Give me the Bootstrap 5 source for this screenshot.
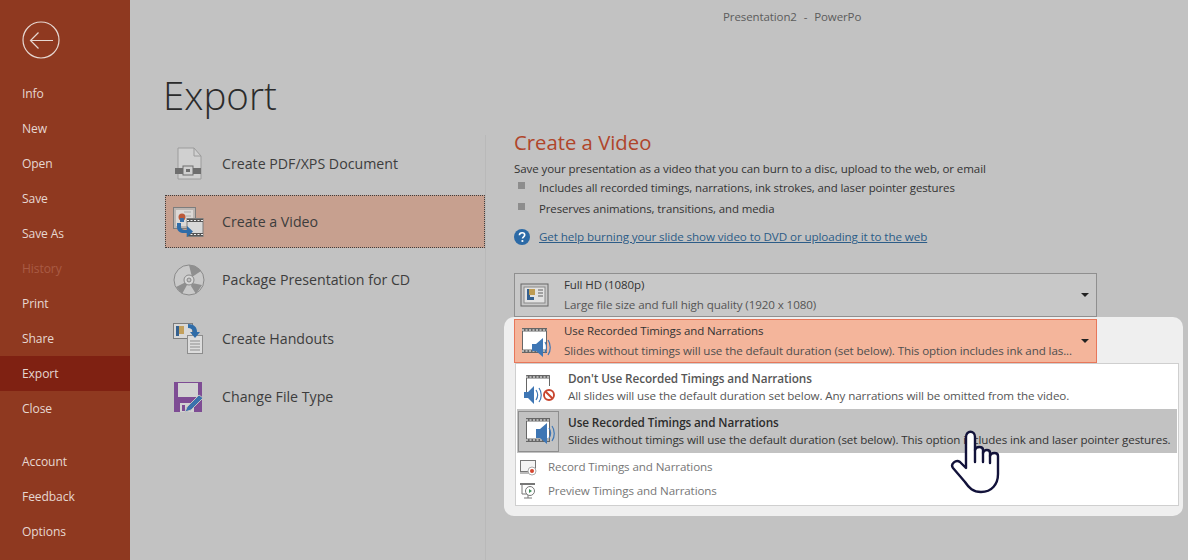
<!DOCTYPE html>
<html lang="en"><head><meta charset="utf-8"><title>Export</title>
<link href="https://cdn.jsdelivr.net/npm/bootstrap@5.3.0/dist/css/bootstrap.min.css" rel="stylesheet">
<style>
html,body{height:560px;overflow:hidden}
body{font-family:"Open Sans","Noto Sans",sans-serif;background:#c2c2c2;color:#333;font-size:12px;letter-spacing:-.1px}
.side{width:130px;height:560px;background:#8f3920;color:#e6d7d1;flex:none}
.backb{padding:21px 0 0 22px;height:76px}
.sitem{height:35px;padding-left:22px;line-height:36px;font-size:12.1px}
.sitem.on{background:#7f2112}
.sitem.off{color:#a95b44}
.sgap{height:18px}
.topt{height:33px;padding-left:593px;line-height:33px;font-size:11.5px;color:#5c5c5c;word-spacing:4px}
.ttl{font-size:38.5px;font-weight:300;color:#2b2b2b;margin:32px 0 0 33px;height:67px;line-height:60px;letter-spacing:0}
.leftc{width:320px;margin-left:35px;margin-top:5px;flex:none}
.lrow{height:53px;margin-bottom:5.3px;font-size:14.2px;color:#3d3d3d;letter-spacing:0;padding-left:7px;gap:17px;border:1px dotted transparent}
.lrow.on{background:#c7a08f;border-color:#3e3e3e}
.lrow svg{flex:none}
.rightc{padding-left:28px;border-left:1px solid #b9b9b9;height:425px;margin-top:3px}
.h2x{font-size:20.3px;color:#b0452a;font-weight:400;margin:-6px 0 0;height:30px;line-height:27px;letter-spacing:0}
.sub{margin:0;padding-top:2px;line-height:16px;font-size:11.55px;color:#333}
.bul{height:21px;font-size:11.45px;gap:14px;padding-left:4px;color:#333}
.bul i{width:7px;height:7px;background:#8d8d8d;display:block;margin-top:-4px}
.hlp{gap:9px;margin-top:8px;height:20px}
.hlp a{color:#2c5c87;font-size:11.65px}
.dd{width:583px;height:44px;border:1px solid #8f8f8f;background:#c8c8c8;padding:0 0 0 5px;gap:14px;position:relative;margin-top:26px}
.dd svg{flex:none}
.dt{font-size:11.5px;color:#333;line-height:20px;white-space:nowrap}
.dt span{display:block;color:#555;font-size:11.6px}
.caret{position:absolute;right:7px;top:19px;width:0;height:0;border:4px solid transparent;border-top:4px solid #222;border-bottom:0}
.hilite{width:679px;height:199px;background:#efefef;border-radius:10px;margin-left:-10px;padding:2px 0 0 10px}
.dd.sel{margin:0;background:#f4b59b;border-color:#e8775a;gap:12px}
.dd.sel span{color:#4f4f4f}
.menux{width:664px;height:143px;margin-left:1px;background:#fff;border:1px solid #cfcfcf;padding:1px}
.mrow{height:44px;gap:11px;padding-left:6px;line-height:17px;font-size:11.63px;color:#555;white-space:nowrap}
.mrow b{display:block;font-weight:600;color:#555;font-size:11.75px}
.mrow svg{flex:none}
.mrow.act{background:#c2c2c2;color:#333;padding-left:1px;gap:9px;font-size:11.58px}
.mrow.act b{color:#2c2c2c}
.ibox{width:41px;height:41px;border:1px solid #8e8e8e;flex:none}
.msm{height:24px;gap:11px;padding-left:2px;font-size:11.6px;color:#777}
.mfirst{margin-top:2px}
.hand{position:absolute;left:950px;top:430px}
</style></head>
<body class="d-flex">
<aside class="side">
 <div class="backb"><svg width="38" height="38" viewBox="0 0 38 38" fill="none" stroke="#e6d7d1" stroke-width="1.2"><circle cx="19" cy="19" r="18"/><path d="M31 19.5H9M16.5 11.5l-8 8 8 8"/></svg></div>
 <div class="sitem">Info</div><div class="sitem">New</div><div class="sitem">Open</div><div class="sitem">Save</div><div class="sitem">Save As</div>
 <div class="sitem off">History</div><div class="sitem">Print</div><div class="sitem">Share</div><div class="sitem on">Export</div><div class="sitem">Close</div>
 <div class="sgap"></div>
 <div class="sitem">Account</div><div class="sitem">Feedback</div><div class="sitem">Options</div>
</aside>
<main class="flex-grow-1">
 <div class="topt">Presentation2 - PowerPo</div>
 <h1 class="ttl">Export</h1>
 <div class="d-flex">
  <div class="leftc">
   <div class="lrow d-flex align-items-center"><svg width="32" height="34" viewBox="0 0 32 34"><path d="M5 1h16l7 8v23H5z" fill="#d0d0d0" stroke="#9c9c9c"/><path d="M21 1v8h7" fill="none" stroke="#9c9c9c"/><rect x="2" y="21" width="26" height="6" fill="#6e6e6e"/><rect x="10" y="19" width="10" height="9" fill="#d0d0d0" stroke="#6e6e6e"/><rect x="13" y="22" width="4" height="3" fill="#6e6e6e"/></svg><span>Create PDF/XPS Document</span></div>
   <div class="lrow on d-flex align-items-center"><svg width="32" height="34" viewBox="0 0 32 34"><rect x=".5" y="2.500" width="22" height="21" fill="#bdb6b2" stroke="#7d7d7d"/><rect x="3" y="5" width="17" height="16" fill="#dcd8d5"/><path d="M11 7h7M13 11h5" stroke="#aaa"/><circle cx="9" cy="12" r="3.500" fill="#bb5a3a"/><path d="M7 13h4v4H7z" fill="#3a6ea5"/><rect x="14" y="13.500" width="16" height="18" fill="#d8d8d8" stroke="#7d7d7d"/><path d="M14 15.500h16M14 29.500h16" stroke="#555" stroke-width="3"/><path d="M14 15.500h16M14 29.500h16" stroke="#eee" stroke-dasharray="2 1.500"/><path d="M8 18v4c0 2 2 3 4 3h2v-4l6 5.500-6 5.500v-4h-3c-4 0-7-2-7-6v-4z" fill="#2f6ca8"/></svg><span>Create a Video</span></div>
   <div class="lrow d-flex align-items-center"><svg width="32" height="32" viewBox="0 0 32 32"><circle cx="16" cy="16" r="15" fill="#c9c9c9" stroke="#8a8a8a"/><path d="M16 1a15 15 0 0 1 12 6l-9 6zM3 23l10-5 1 3-5 9zM29 21l-10-2-1 3 5 8z" fill="#8f8f8f"/><circle cx="16" cy="16" r="5" fill="#d6d6d6" stroke="#888"/><circle cx="16" cy="16" r="2" fill="#c2c2c2" stroke="#888"/></svg><span>Package Presentation for CD</span></div>
   <div class="lrow d-flex align-items-center"><svg width="32" height="34" viewBox="0 0 32 34"><rect x=".5" y="2.500" width="19" height="15" fill="#d8d8d8" stroke="#7d7d7d"/><path d="M3 5h3v10H3z" fill="#34608f"/><path d="M6 5h5v8H6z" fill="#c3a05c"/><rect x="14.500" y="14.500" width="15" height="18" fill="#dcdcdc" stroke="#8d8d8d"/><path d="M17 20h10M17 23h10M17 26h10M17 29h10" stroke="#8d8d8d"/><path d="M15 3c6 0 9 3 9 8h3l-5 6-5-6h3c0-2-2-4-5-4z" fill="#2f6ca8"/></svg><span>Create Handouts</span></div>
   <div class="lrow d-flex align-items-center"><svg width="32" height="32" viewBox="0 0 32 32"><path d="M1 1h28v30H1z" fill="#7e4c94"/><rect x="5" y="2" width="20" height="14" fill="#d2d2d2"/><rect x="7" y="22" width="14" height="9" fill="#d2d2d2"/><rect x="9" y="24" width="3" height="6" fill="#7e4c94"/><path d="M12 31l2-5L26 14l4 3-12 12z" fill="#3a72ad" stroke="#c2c2c2"/></svg><span>Change File Type</span></div>
  </div>
  <div class="rightc flex-grow-1">
   <h2 class="h2x">Create a Video</h2>
   <p class="sub">Save your presentation as a video that you can burn to a disc, upload to the web, or email</p>
   <div class="bul d-flex align-items-center"><i></i><span>Includes all recorded timings, narrations, ink strokes, and laser pointer gestures</span></div>
   <div class="bul d-flex align-items-center"><i></i><span>Preserves animations, transitions, and media</span></div>
   <div class="hlp d-flex align-items-center"><svg width="16" height="16" viewBox="0 0 16 16"><circle cx="8" cy="8" r="8" fill="#2c6aa6"/><path d="M5.400 6.200C5.500 4.600 6.700 3.800 8.100 3.800c1.500 0 2.600.9 2.600 2.100 0 1.900-2.200 1.900-2.200 3.600" fill="none" stroke="#fff" stroke-width="1.600"/><circle cx="8.400" cy="12" r="1.100" fill="#fff"/></svg><a href="#">Get help burning your slide show video to DVD or uploading it to the web</a></div>
   <div class="dd d-flex align-items-center"><svg width="30" height="26" viewBox="0 0 30 26"><rect x="1" y="2" width="27" height="22" fill="#c8c8c8" stroke="#666"/><rect x="4" y="5" width="21" height="16" fill="#e2e2e2" stroke="#888"/><path d="M7 7h3v10H7zM7 15h7v3H7z" fill="#34608f"/><path d="M9 7h6v6H9z" fill="#bf9c52"/><path d="M18 8h5M18 11h5M18 14h5" stroke="#a0a0a0" stroke-width="2"/></svg><div class="dt">Full HD (1080p)<span>Large file size and full high quality (1920 x 1080)</span></div><i class="caret"></i></div>
   <div class="hilite">
    <div class="dd sel d-flex align-items-center"><svg width="32" height="34" viewBox="0 0 32 34"><rect x="2.500" y="4.500" width="24" height="24" fill="#fff" stroke="#666"/><path d="M2 6h25M2 27h25" stroke="#666" stroke-width="3"/><path d="M2 6h25M2 27h25" stroke="#fff" stroke-dasharray="2 1.500"/><path d="M12 20h4l7-6v19l-7-6h-4z" fill="#3e76b4"/><path d="M25 18c2 3 2 8 0 11M28 16c3 4 3 11 0 15" fill="none" stroke="#3e76b4" stroke-width="1.200"/></svg><div class="dt">Use Recorded Timings and Narrations<span>Slides without timings will use the default duration (set below). This option includes ink and las...</span></div><i class="caret"></i></div>
    <div class="menux">
     <div class="mrow d-flex align-items-center"><svg width="34" height="34" viewBox="0 0 34 34"><path d="M3.500 22V5.500h23V16" fill="#fff" stroke="#666"/><path d="M3 7h24" stroke="#666" stroke-width="3"/><path d="M3 7h24" stroke="#fff" stroke-dasharray="2 1.500"/><path d="M1 22h4l6-6v18l-6-6H1z" fill="#3e76b4"/><path d="M13 20c2 3 2 7 0 10M16 18c3 4 3 10 0 14" fill="none" stroke="#3e76b4" stroke-width="1.200"/><circle cx="26" cy="25" r="5" fill="#fff" stroke="#c8452f" stroke-width="1.900"/><path d="M22.500 21.500l7 7" stroke="#c8452f" stroke-width="1.900"/></svg><div><b>Don't Use Recorded Timings and Narrations</b>All slides will use the default duration set below. Any narrations will be omitted from the video.</div></div>
     <div class="mrow act d-flex align-items-center"><div class="ibox d-flex align-items-center justify-content-center"><svg width="34" height="34" viewBox="0 0 34 34"><rect x="4.500" y="4.500" width="23" height="23" fill="#fff" stroke="#666"/><path d="M4 6h24M4 26h24" stroke="#666" stroke-width="3"/><path d="M4 6h24M4 26h24" stroke="#fff" stroke-dasharray="2 1.500"/><path d="M14 15h4l7-6v21l-7-6h-4z" fill="#3e76b4"/><path d="M27 14c2 3 2 7 0 10M30 12c3 4 3 11 0 15" fill="none" stroke="#3e76b4" stroke-width="1.200"/></svg></div><div><b>Use Recorded Timings and Narrations</b>Slides without timings will use the default duration (set below). This option includes ink and laser pointer gestures.</div></div>
     <div class="msm mfirst d-flex align-items-center"><svg width="18" height="18" viewBox="0 0 18 18"><rect x="1.500" y="2.500" width="15" height="11" fill="#f4f4f4" stroke="#777"/><path d="M1 15h9" stroke="#777"/><circle cx="13" cy="13" r="4" fill="#fff" stroke="#aaa"/><circle cx="13" cy="13" r="2" fill="#d4452f"/></svg><span>Record Timings and Narrations</span></div>
     <div class="msm d-flex align-items-center"><svg width="18" height="18" viewBox="0 0 18 18"><path d="M1 2h15" stroke="#555" stroke-width="1.600"/><path d="M3 3v9h5" fill="none" stroke="#777"/><circle cx="11" cy="9" r="4.500" fill="#fff" stroke="#777"/><path d="M10 7l3 2-3 2z" fill="#3f8f5a"/><path d="M5 16h8M9 13v3" stroke="#777"/></svg><span>Preview Timings and Narrations</span></div>
    </div>
   </div>
  </div>
 </div>
</main>
<svg class="hand" width="52" height="66" viewBox="0 0 52 66" fill="#fff" stroke="#12123a" stroke-width="2.400" stroke-linejoin="round" stroke-linecap="round"><path d="M16 7c0-7 9-7 9 0v13c1-4 8-4 8 0v3c1-4 7-4 7 0v3c1-4 8-4 8 0v18c0 10-6 18-17 18-8 0-12-4-16-10L3 38c-3-4 3-9 7-6l6 6z"/><path d="M25 20v12M33 23v9M40 26v7" fill="none"/></svg>
</body></html>
